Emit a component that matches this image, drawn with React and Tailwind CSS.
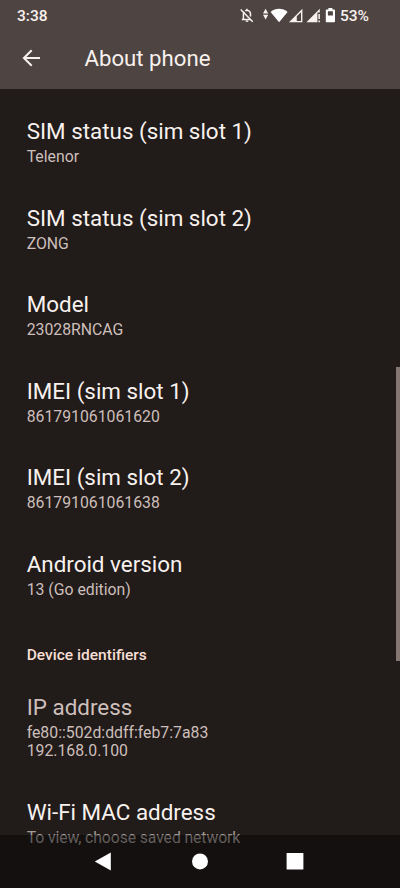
const rows = [
  ['SIM status (sim slot 1)', 'Telenor'],
  ['SIM status (sim slot 2)', 'ZONG'],
  ['Model', '23028RNCAG'],
  ['IMEI (sim slot 1)', '861791061061620'],
  ['IMEI (sim slot 2)', '861791061061638'],
  ['Android version', '13 (Go edition)'],
];

function Row({ title, lines, muted, dim }) {
  return (
    <div className="pb-[18.4px] pt-[19.9px]">
      <div className={`text-[22.4px] leading-[26px] ${muted ? 'text-[#cdbfbb]' : 'text-[#f8f1ee]'}`}>{title}</div>
      <div className={`mt-[3.9px] text-[15.8px] leading-[18.3px] ${dim ? 'tracking-[-0.11px] text-[#a39b97]' : 'text-[#cdbfbb]'}`}>
        {lines.map((l) => (
          <div key={l}>{l}</div>
        ))}
      </div>
    </div>
  );
}

function StatusIcons() {
  return (
    <svg className="h-8 w-[100px]" viewBox="238 0 100 32" fill="none">
      {/* muted bell */}
      <path d="M241.8 19.4h9.2M243.4 19v-4.7c0-1 .3-1.8.8-2.5M245.2 10.9c.5-.4 1-.6 1.7-.7V8.8M246.9 10.2c2.2.2 3.6 1.8 3.6 4.1v2.2" stroke="#f8f1ee" strokeWidth="1.5" />
      <path d="M240.7 9.5l12 12.2" stroke="#f8f1ee" strokeWidth="1.5" />
      <path d="M245.5 20.6h3a1.5 1.5 0 0 1-3 0z" fill="#f8f1ee" />
      {/* data arrows */}
      <path d="M263 13.4l2.6-4.6 2.6 4.6zM263 14.8h5.2l-2.6 4.6z" fill="#f8f1ee" />
      {/* wifi */}
      <path d="M270.6 11.9c4.8-4.3 12.2-4.3 17 0L279.1 22.3z" fill="#fff" />
      {/* signal, sim 1 */}
      <path fillRule="evenodd" d="M289 22.2L302.4 8.8v13.4zM296.8 20.9h4.2v-8.7l-4.2 4.1z" fill="#f8f1ee" />
      {/* signal, sim 2 */}
      <path d="M306.4 22.2L319.8 8.8v3.7h-2.4v9.7z" fill="#f8f1ee" />
      <path d="M318.4 14h1.5v5h-1.5zM318.4 20.4h1.5v1.8h-1.5z" fill="#f8f1ee" />
      {/* battery */}
      <path fillRule="evenodd" d="M328.4 7.9h4v1.5h1.6c.6 0 1 .4 1 1v10.8c0 .6-.4 1-1 1h-7.2c-.6 0-1-.4-1-1V10.4c0-.6.4-1 1-1h1.6zM327.9 11.3v4.2h5v-4.2z" fill="#fff" />
    </svg>
  );
}

export default function App() {
  return (
    <div className="relative flex h-[888px] w-[400px] flex-col overflow-hidden bg-[#211b19] font-['Roboto',sans-serif]">
      <header className="h-[89px] shrink-0 bg-[#4e4542]">
        <div className="flex h-8 items-center pl-[17px] text-[#f8f1ee]">
          <span className="text-[15.5px] font-medium leading-8">3:38</span>
          <div className="ml-auto flex items-center pr-[31px]">
            <StatusIcons />
            <span className="ml-[2px] text-[15.5px] font-medium leading-8">53%</span>
          </div>
        </div>
        <div className="flex h-[52px] items-center pl-[22px]">
          <svg className="h-[18px] w-[18px]" viewBox="0 0 18 18" fill="none" stroke="#f8f1ee" strokeWidth="2">
            <path d="M18 9H2M9.7 1.2L1.9 9l7.8 7.8" />
          </svg>
          <h1 className="ml-[44.5px] text-[22.2px] leading-[26px] text-[#f8f1ee]">About phone</h1>
        </div>
      </header>
      <main className="flex min-h-0 flex-1 overflow-hidden">
        <div className="flex-1 pl-[26.7px] pt-[9.6px]">
          {rows.map(([t, s]) => (
            <Row key={t} title={t} lines={[s]} />
          ))}
          <h2 className="pb-[10.3px] pt-[28.2px] text-[15.55px] font-medium leading-[18.3px] text-[#f8dfd4]">Device identifiers</h2>
          <Row title="IP address" lines={['fe80::502d:ddff:feb7:7a83', '192.168.0.100']} muted />
          <Row title="Wi-Fi MAC address" lines={['To view, choose saved network']} dim />
        </div>
        <div className="mt-[278px] h-[294px] w-[4.5px] bg-[#857672]" />
      </main>
      <nav className="absolute inset-x-0 bottom-0 h-[53px] bg-black/40">
        <svg className="h-full w-full" viewBox="0 835 400 53" fill="#fff">
          <path d="M94.8 861.4L110.8 852.4v18z" />
          <circle cx="200" cy="861.4" r="8" />
          <rect x="286.6" y="853" width="16.8" height="16.6" rx="0.6" />
        </svg>
      </nav>
    </div>
  );
}
